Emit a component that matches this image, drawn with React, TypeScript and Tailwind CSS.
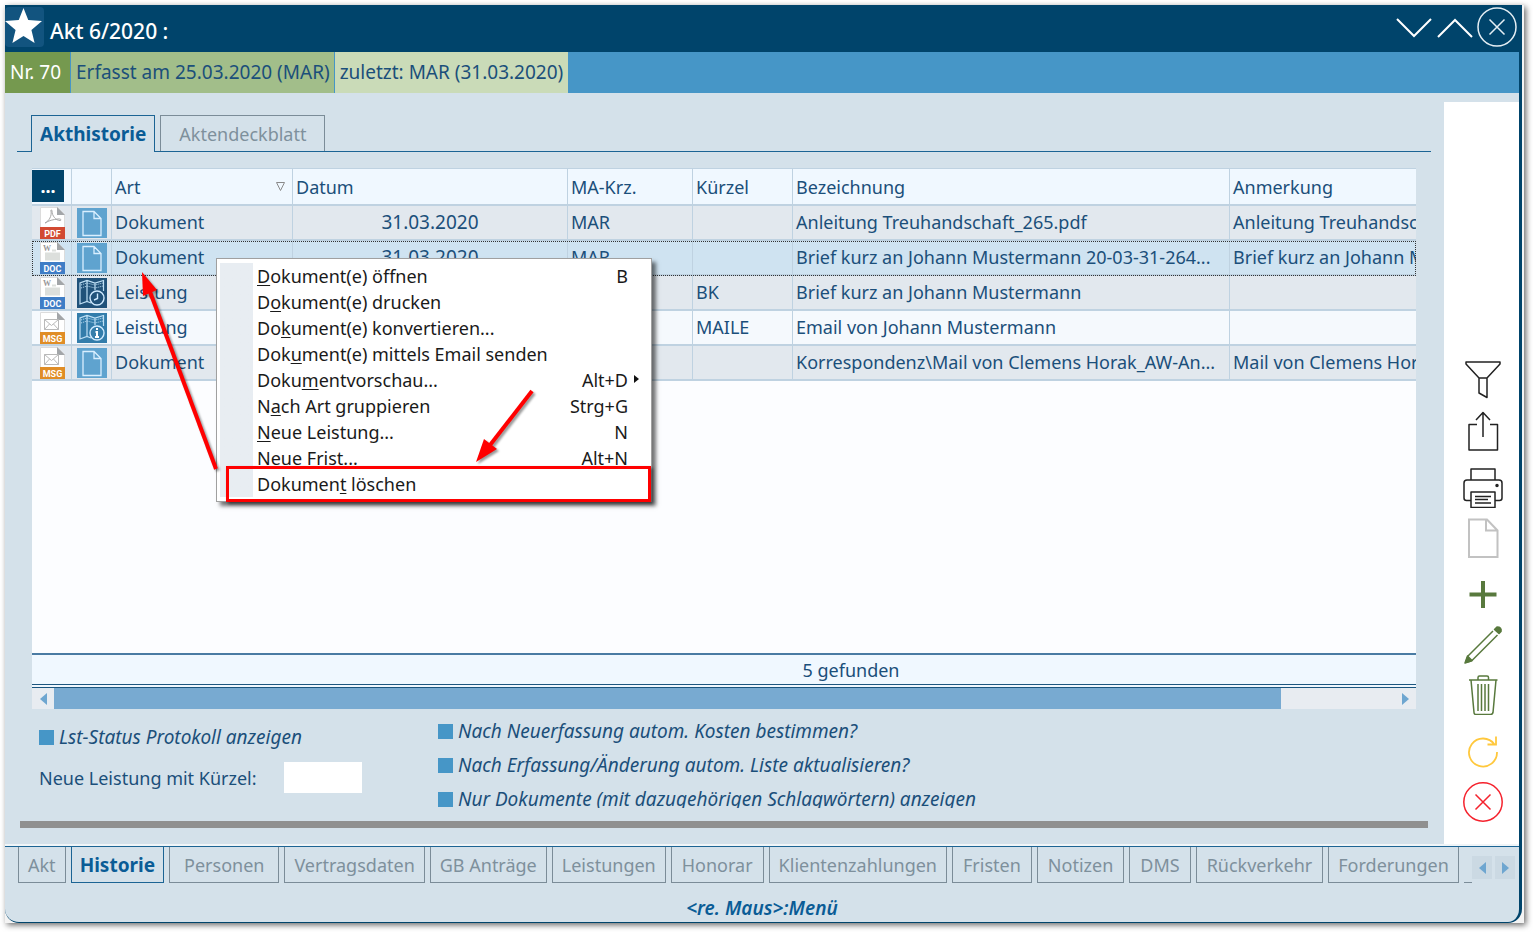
import type { ReactNode } from "react";

type FileKind = "PDF" | "DOC" | "MSG";
type TypeKind = "doc" | "clock" | "info";

type Row = {
  file: FileKind;
  type: TypeKind;
  art: string;
  datum: string;
  ma: string;
  kuerzel: string;
  bezeichnung: string;
  anmerkung: string;
  selected?: boolean;
};

const rows: Row[] = [
  { file: "PDF", type: "doc", art: "Dokument", datum: "31.03.2020", ma: "MAR", kuerzel: "", bezeichnung: "Anleitung Treuhandschaft_265.pdf", anmerkung: "Anleitung Treuhandschaft_265.pdf" },
  { file: "DOC", type: "doc", art: "Dokument", datum: "31.03.2020", ma: "MAR", kuerzel: "", bezeichnung: "Brief kurz an Johann Mustermann 20-03-31-264...", anmerkung: "Brief kurz an Johann Mustermann", selected: true },
  { file: "DOC", type: "clock", art: "Leistung", datum: "", ma: "", kuerzel: "BK", bezeichnung: "Brief kurz an Johann Mustermann", anmerkung: "" },
  { file: "MSG", type: "info", art: "Leistung", datum: "", ma: "", kuerzel: "MAILE", bezeichnung: "Email von Johann Mustermann", anmerkung: "" },
  { file: "MSG", type: "doc", art: "Dokument", datum: "", ma: "", kuerzel: "", bezeichnung: "Korrespondenz\\Mail von Clemens Horak_AW-An...", anmerkung: "Mail von Clemens Horak" },
];

// label is split around the underlined access key
const menuItems: { label: [string, string, string]; shortcut?: string; sub?: boolean }[] = [
  { label: ["", "D", "okument(e) öffnen"], shortcut: "B" },
  { label: ["D", "o", "kument(e) drucken"] },
  { label: ["Do", "k", "ument(e) konvertieren..."] },
  { label: ["Dok", "u", "ment(e) mittels Email senden"] },
  { label: ["Doku", "m", "entvorschau..."], shortcut: "Alt+D", sub: true },
  { label: ["N", "a", "ch Art gruppieren"], shortcut: "Strg+G" },
  { label: ["", "N", "eue Leistung..."], shortcut: "N" },
  { label: ["Neue Fri", "s", "t..."], shortcut: "Alt+N" },
  { label: ["Dokumen", "t", " löschen"] },
];

const bottomTabs = [
  { name: "Akt", style: "px-[9px]" },
  { name: "Historie", style: "px-[8px]" },
  { name: "Personen", style: "px-[14px]" },
  { name: "Vertragsdaten", style: "px-[9px]" },
  { name: "GB Anträge", style: "px-[9px]" },
  { name: "Leistungen", style: "px-[9px]" },
  { name: "Honorar", style: "px-[10px]" },
  { name: "Klientenzahlungen", style: "px-[9px]" },
  { name: "Fristen", style: "px-[10px]" },
  { name: "Notizen", style: "px-[10px]" },
  { name: "DMS", style: "px-[10px]" },
  { name: "Rückverkehr", style: "px-[10px]" },
  { name: "Forderungen", style: "px-[9px]" },
];

const fileColors: Record<FileKind, string> = {
  PDF: "#d24a32",
  DOC: "#3f7dc6",
  MSG: "#e08d26",
};

function FileIcon({ kind }: { kind: FileKind }) {
  return (
    <svg width="25" height="32" viewBox="0 0 25 32" className="ml-auto mr-[6px]">
      <path d="M0.5 0.5H17.5L24.5 7.5V31H0.5Z" fill="#fff" stroke="#dcdcdc" />
      <path d="M17 0L25 8H17Z" fill="#a3a6a9" />
      {kind === "PDF" && (
        <path
          d="M5 16C9 14 12 9 11 4C10.500 2.500 12 2.500 12 4C12 9 16 13.500 20 13.500C22 13.500 21 11.500 18 12C13 12.500 9 13.500 5 16Z"
          fill="none"
          stroke="#a8a8a8"
        />
      )}
      {kind === "DOC" && (
        <>
          <text x="3" y="9" fontSize="8" fontFamily="Liberation Serif" fontWeight="bold" fill="#999">
            W
          </text>
          <path d="M12 8.500H16M5 11.500H20M5 13.500H20M5 15.500H20M5 17.500H20" stroke="#dcdfdc" strokeWidth="2" />
        </>
      )}
      {kind === "MSG" && (
        <path d="M4.500 7.500H18.500V17.500H4.500ZM4.500 7.500L11.500 13.500L18.500 7.500M4.500 17.500L9.500 12M18.500 17.500L13.500 12" fill="none" stroke="#b9b9b9" />
      )}
      <rect y="20" width="25" height="12" fill={fileColors[kind]} />
      <text
        x="12.500"
        y="29.500"
        textAnchor="middle"
        fontSize="9"
        fontWeight="bold"
        fontFamily="Roboto"
        fill="#fff"
      >
        {kind}
      </text>
    </svg>
  );
}

function TypeIcon({ kind }: { kind: TypeKind }) {
  if (kind === "doc") {
    return (
      <svg width="30" height="30" viewBox="0 0 30 30" className="mx-auto">
        <rect width="30" height="30" fill="#5fa3cf" />
        <path d="M6 3.500H17L24 10.500V27.500H6ZM17 3.500V10.500H24" fill="none" stroke="#d9efff" strokeWidth="1.300" />
      </svg>
    );
  }
  return (
    <svg width="30" height="30" viewBox="0 0 30 30" className="mx-auto">
      <rect width="30" height="30" fill={kind === "clock" ? "#20527a" : "#337dab"} />
      <path
        d="M14 25L10 23.500L3 26V5L10 2.500L18 5L26.500 2.500V13M10 3V23M18 5V12"
        fill="none"
        stroke="#bfe0f5"
        strokeWidth="1.200"
      />
      <path d="M4 7L10 5L18 7L26 5M4 10L10 8L18 10L26 8" fill="none" stroke="#bfe0f5" strokeDasharray="1 1" />
      <circle cx="20" cy="20" r="7" fill={kind === "clock" ? "#20527a" : "#337dab"} stroke="#cfeaff" strokeWidth="1.400" />
      {kind === "clock" ? (
        <path d="M20.500 15.500V20.500L17 22" fill="none" stroke="#cfeaff" strokeWidth="1.400" />
      ) : (
        <path d="M20 15V17M18.500 19H20V24M18 24H22" fill="none" stroke="#fff" strokeWidth="2" />
      )}
    </svg>
  );
}

function ToolButton({ label, color, children }: { label: string; color: string; children: ReactNode }) {
  return (
    <button type="button" aria-label={label} className="block size-10">
      <svg width="40" height="40" viewBox="0 0 40 40" fill="none" stroke={color} strokeWidth="1.500" strokeLinejoin="round">
        {children}
      </svg>
    </button>
  );
}

function Toolbar() {
  return (
    <aside className="mt-[9px] flex w-[75px] shrink-0 flex-col items-center justify-end gap-[17px] bg-white pb-[22px] pl-[2px]">
      <div className="flex flex-col gap-[11px]">
        <ToolButton label="Filter" color="#222">
          <path d="M3 2H37V4L24 18V37.500L16 33V18L3 4ZM16 18H24" />
        </ToolButton>
        <ToolButton label="Teilen" color="#222">
          <path d="M14 13.500H6V39H34.500V13.500H27M20 26V1.500M13 9L20 1.500L27 9" />
        </ToolButton>
      </div>
      <div className="flex flex-col gap-[10px]">
        <ToolButton label="Drucken" color="#222">
          <path d="M8 12V1H32V12M8 32.500H3.500Q1 32.500 1 30V15Q1 12 4 12H36Q39 12 39 15V30Q39 32.500 36.500 32.500H32M8 24H32V39.500H8ZM12 28.500H28M12 31.500H25M12 35H28" />
          <circle cx="34" cy="17.500" r="1" fill="#222" />
        </ToolButton>
        <ToolButton label="Dokument" color="#c2c2c2">
          <path strokeWidth="2" strokeLinejoin="miter" d="M6 1.500H24L34.500 12.500V39H6ZM23 1.500V12.500H34" />
        </ToolButton>
      </div>
      <div className="flex flex-col gap-[10px]">
        <ToolButton label="Neu" color="#58793d">
          <path strokeWidth="4" d="M20 6V33M6.500 19.500H33.500" />
        </ToolButton>
        <ToolButton label="Bearbeiten" color="#58793d">
          <path d="M2.500 37.500L5 31L30 6M8.500 36L34.500 10M2.500 37.500L8.500 36" />
          <path d="M2 38L4.500 31L9 35.500Z" fill="#58793d" />
          <path d="M31.500 4.500L34 2Q39 2 38 6.500L36 8.500Z" fill="#58793d" />
        </ToolButton>
        <ToolButton label="Löschen" color="#58793d">
          <path d="M6 5H34.500M15 5V2.500Q15 1 16.500 1H24Q25.500 1 25.500 2.500V5M8 5L11 37.500Q11 39.500 13 39.500H27.500Q29.500 39.500 30 37.500L33 5M15 9V36M18.500 9V36M22 9V36M25.500 9V36" />
        </ToolButton>
      </div>
      <div className="flex flex-col gap-[10px]">
        <ToolButton label="Aktualisieren" color="#ffc83d">
          <path strokeWidth="1.800" strokeLinejoin="miter" d="M34 20A14 14 0 1 1 31.500 12.500M33 4.500V12.500H24.500" />
        </ToolButton>
        <ToolButton label="Abbrechen" color="#f5222d">
          <circle cx="20" cy="20" r="19.200" />
          <path d="M12.500 12.500L27.500 27.500M27.500 12.500L12.500 27.500" />
        </ToolButton>
      </div>
    </aside>
  );
}

function ContextMenu() {
  return (
    <div className="absolute top-[90px] left-[184px] z-10 w-[436px] border border-[#a0a0a0] bg-white px-[3px] py-[4px] text-[#1a1a1a] shadow-[4px_4px_4px_rgba(0,0,0,0.55)]">
      <ul className="bg-linear-to-r from-[#e8edf2] from-[33px] to-white to-[33px]">
        {menuItems.map((item) => (
          <li key={item.label.join("")}>
            <button type="button" className="flex w-full justify-between pr-[20px] pl-[37px] leading-[26px]">
              <span className="whitespace-pre">
                {item.label[0]}
                <span className="underline underline-offset-2">{item.label[1]}</span>
                {item.label[2]}
              </span>
              {item.shortcut && (
                <span className="relative">
                  {item.shortcut}
                  {item.sub && (
                    <svg width="5" height="8" className="absolute top-[8px] -right-[11px]">
                      <path d="M0 0L5 4L0 8Z" fill="#111" />
                    </svg>
                  )}
                </span>
              )}
            </button>
          </li>
        ))}
      </ul>
      <div className="pointer-events-none absolute right-0 -bottom-[1px] h-[36px] w-[425px] border-3 border-[#ff0000] shadow-[2px_2px_3px_rgba(0,0,0,0.5)]" />
    </div>
  );
}

function Arrows() {
  return (
    <svg
      width="420"
      height="220"
      viewBox="0 0 420 220"
      className="pointer-events-none absolute top-[91px] left-[100px] z-20 drop-shadow-[2px_2px_1px_rgba(0,0,0,0.4)]"
    >
      <g fill="#ff0000" stroke="#ff0000">
        <path d="M84 210L17 30" strokeWidth="4" />
        <path d="M10 13L11 37L25 31Z" stroke="none" />
        <path d="M400 132L355 190" strokeWidth="4" />
        <path d="M344 203L352 180L365 190Z" stroke="none" />
      </g>
    </svg>
  );
}

const cell = "overflow-hidden border-r border-b-2 border-[#bfd2e1] px-[3px] whitespace-nowrap";

function HistoryTable() {
  return (
    <table className="w-full table-fixed border-separate border-spacing-0 border-t border-[#bfd2e1] text-left">
      <colgroup>
        <col className="w-[40px]" />
        <col className="w-[40px]" />
        <col className="w-[181px]" />
        <col className="w-[275px]" />
        <col className="w-[125px]" />
        <col className="w-[100px]" />
        <col className="w-[437px]" />
        <col />
      </colgroup>
      <thead>
        <tr className="h-[37px] bg-[#f0f8ff]">
          <th className="border-r border-b-2 border-[#bfd2e1] p-0">
            <button type="button" aria-label="Spalten" className="mb-[2px] block h-[32px] w-[32px] bg-[#00446b] text-white">
              ...
            </button>
          </th>
          <th className={cell}></th>
          <th className={`${cell} font-normal`}>
            <span className="flex items-center justify-between pr-[4px]">
              Art
              <svg width="9" height="9" viewBox="0 0 9 9">
                <path d="M0.500 0.500H8.500L4.500 8.500Z" fill="none" stroke="#8a8a8a" />
              </svg>
            </span>
          </th>
          <th className={`${cell} font-normal`}>Datum</th>
          <th className={`${cell} font-normal`}>MA-Krz.</th>
          <th className={`${cell} font-normal`}>Kürzel</th>
          <th className={`${cell} font-normal`}>Bezeichnung</th>
          <th className={`${cell} border-r-0 font-normal`}>Anmerkung</th>
        </tr>
      </thead>
      <tbody>
        {rows.map((row, i) => (
          <tr
            key={i}
            className={`h-[35px] ${
              row.selected
                ? "bg-[#cfe3f1] outline-1 -outline-offset-1 outline-dotted outline-[#333]"
                : i === 3
                  ? "bg-[#f5f9fd]"
                  : "bg-[#e2e8ee]"
            }`}
          >
            <td className="border-r border-b-2 border-[#bfd2e1] p-0"><FileIcon kind={row.file} /></td>
            <td className="border-r border-b-2 border-[#bfd2e1] p-0"><TypeIcon kind={row.type} /></td>
            <td className={`${cell} pb-[2px]`}>{row.art}</td>
            <td className={`${cell} pb-[2px] text-center text-[19px]`}>{row.datum}</td>
            <td className={`${cell} pb-[2px]`}>{row.ma}</td>
            <td className={`${cell} pb-[2px]`}>{row.kuerzel}</td>
            <td className={`${cell} pb-[2px]`}>{row.bezeichnung}</td>
            <td className={`${cell} border-r-0 pb-[2px]`}>{row.anmerkung}</td>
          </tr>
        ))}
      </tbody>
    </table>
  );
}

function Check({ label }: { label: string }) {
  return (
    <label className="flex h-[24px] items-center gap-[5px] text-[19px] italic">
      <input type="checkbox" className="size-[15px] appearance-none bg-[#4696c7]" />
      {label}
    </label>
  );
}

function Triangle({ left }: { left?: boolean }) {
  return (
    <svg width="7" height="12" viewBox="0 0 7 12">
      <path d={left ? "M7 0V12L0 6Z" : "M0 0V12L7 6Z"} fill="#6ea6d0" />
    </svg>
  );
}

export default function App() {
  return (
    <div className="flex min-h-screen bg-white pt-[5px] pr-[9px] pb-[9px] pl-[5px] font-['Noto_Sans','Open_Sans',sans-serif] text-[18px] leading-[24px] text-[#1b4f7a]">
      <div className="flex min-w-0 flex-1 bg-[#f4f4f4] pr-[2px] shadow-[2px_2px_6px_rgba(0,0,0,0.6)]">
        <div className="flex min-w-0 flex-1 flex-col rounded-b-[14px] border-r-3 border-b border-[#00446b] bg-[#d4e1ea]">
          <header className="flex h-[47px] items-center justify-between bg-[#00446b] text-white">
            <div className="flex items-center">
              <div className="mb-[3px] flex h-[40px] w-[39px] items-center rounded bg-[#12547f]">
                <svg width="37" height="36" viewBox="0 0 35 36" preserveAspectRatio="none" className="mb-[3px] shrink-0">
                  <path d="M17.500 0L22 12L35 13L25 22L28 35L17.500 28L7 35L10 22L0 13L13 12Z" fill="#fff" />
                </svg>
              </div>
              <h1 className="pt-[4px] pl-[6px] text-[21px] font-medium">Akt 6/2020 :</h1>
            </div>
            <div className="flex items-center gap-[3px] pr-[2px] pb-[3px]">
              <button type="button" aria-label="Nächster">
                <svg width="38" height="40" fill="none" stroke="#fff" strokeWidth="2">
                  <path d="M2 12L19 29L36 12" />
                </svg>
              </button>
              <button type="button" aria-label="Vorheriger">
                <svg width="38" height="40" fill="none" stroke="#fff" strokeWidth="2">
                  <path d="M2 30L19 13L36 30" />
                </svg>
              </button>
              <button type="button" aria-label="Schließen">
                <svg width="40" height="40" fill="none" stroke="#e4eef4" strokeWidth="1.500">
                  <circle cx="20" cy="20" r="19" />
                  <path d="M12.500 12.500L27.500 27.500M27.500 12.500L12.500 27.500" />
                </svg>
              </button>
            </div>
          </header>

          <div className="flex h-[41px] bg-[#4696c7] text-[19px] leading-[41px]">
            <span className="border-r border-[#4696c7] bg-[#75994f] pr-[9px] pl-[5px] text-white">Nr. 70</span>
            <span className="border-r border-[#4696c7] bg-[#a2be8a] pr-[4px] pl-[5px]">Erfasst am 25.03.2020 (MAR)</span>
            <span className="bg-[#cadbb8] px-[5px]">zuletzt: MAR (31.03.2020)</span>
          </div>

          <div className="flex flex-1 border-b-2 border-[#f0f5f8]">
            <div className="flex min-w-0 flex-1 flex-col pt-[22px] pb-[16px]">
              <div className="mr-[13px] ml-[12px] flex items-end gap-[5px] border-b border-[#1c6494] pl-[14px]">
                <button type="button" className="-mb-[1px] h-[37px] border border-b-0 border-[#1c6494] bg-[#d4e1ea] px-[8px] text-[19px] font-bold text-[#0a5c96]">
                  Akthistorie
                </button>
                <button type="button" className="h-[36px] w-[165px] border border-b-0 border-[#7b8c98] text-[#7e909c]">
                  Aktendeckblatt
                </button>
              </div>

              <div className="relative mt-[16px] mr-[28px] ml-[27px] flex flex-1 flex-col bg-[#fcfdff]">
                <HistoryTable />
                <ContextMenu />
                <Arrows />
                <div className="mt-auto border-t-2 border-b-4 border-double border-t-[#4a7ba3] border-b-[#1c567f] bg-[#f0f8ff] pt-[3px] pb-[2px] pl-[254px] text-center">
                  5 gefunden
                </div>
                <div className="flex h-[21px] items-center bg-[#e8ecf1]">
                  <button type="button" aria-label="Links" className="flex w-[22px] justify-center">
                    <Triangle left />
                  </button>
                  <div className="h-full w-[1227px] bg-[#78aad1]" />
                  <button type="button" aria-label="Rechts" className="ml-auto flex w-[22px] justify-center">
                    <Triangle />
                  </button>
                </div>
              </div>

              <div className="flex pl-[34px]">
                <div className="w-[399px] pt-[16px]">
                  <Check label="Lst-Status Protokoll anzeigen" />
                  <div className="mt-[13px] flex items-center justify-between pr-[76px]">
                    <label htmlFor="kuerzel">Neue Leistung mit Kürzel:</label>
                    <input id="kuerzel" type="text" className="h-[31px] w-[78px] bg-white px-1" />
                  </div>
                </div>
                <div className="flex h-[99px] flex-col gap-[10px] overflow-hidden pt-[10px]">
                  <Check label="Nach Neuerfassung autom. Kosten bestimmen?" />
                  <Check label="Nach Erfassung/Änderung autom. Liste aktualisieren?" />
                  <Check label="Nur Dokumente (mit dazugehörigen Schlagwörtern) anzeigen" />
                </div>
              </div>
              <div className="mt-[13px] mr-[16px] ml-[15px] h-[7px] bg-[#909090]" />
            </div>
            <Toolbar />
          </div>

          <nav className="flex border-t border-[#1c6494] pl-[13px]">
            <div className="flex min-w-0 flex-1 gap-[5px] overflow-hidden">
              {bottomTabs.map((tab) => (
                <button
                  key={tab.name}
                  type="button"
                  className={`h-[36px] shrink-0 border border-t-0 ${tab.style} ${
                    tab.name === "Historie"
                      ? "border-[#1c6494] text-[19px] font-bold text-[#0a5c96]"
                      : "border-[#7b8c98] text-[#7e909c]"
                  }`}
                >
                  {tab.name}
                </button>
              ))}
              <div className="flex-1 border-b border-[#7b8c98]" />
            </div>
            <div className="flex items-center gap-[3px] pt-[5px] pr-[4px]">
              <button type="button" aria-label="Zurück" className="flex h-[23px] w-[20px] items-center justify-center bg-[#cbd9e3]">
                <Triangle left />
              </button>
              <button type="button" aria-label="Weiter" className="flex h-[23px] w-[20px] items-center justify-center bg-[#cbd9e3]">
                <Triangle />
              </button>
            </div>
          </nav>

          <footer className="pt-[13px] pb-[2px] text-center text-[19px] font-semibold text-[#0a5c96] italic">&lt;re. Maus&gt;:Menü</footer>
        </div>
      </div>
    </div>
  );
}
